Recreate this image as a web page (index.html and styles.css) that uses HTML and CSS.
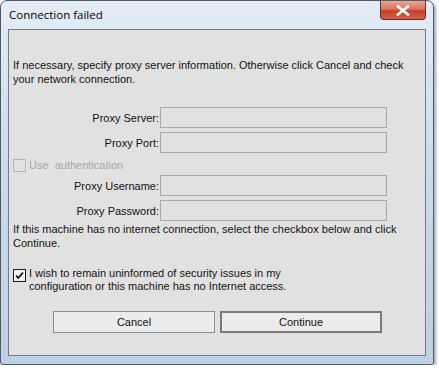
FILE: index.html
```html
<!DOCTYPE html>
<html lang="en">
<head>
    <meta charset="UTF-8">
    <title>Connection failed</title>
    <link rel="stylesheet" href="styles.css">
</head>
<body>
    <div class="window">
        <div class="titlebar">
            <span class="title">Connection failed</span>
            <div class="close-btn">
                <svg width="14" height="11" viewBox="0 0 14 11">
                    <path d="M2 1.5 L12 9.5 M12 1.5 L2 9.5" stroke="#fff" stroke-width="2.6" stroke-linecap="square"/>
                </svg>
            </div>
        </div>
        <div class="client">
            <p class="intro">If necessary, specify proxy server information. Otherwise click Cancel and check your network connection.</p>

            <div class="field">
                <label>Proxy Server:</label>
                <div class="textbox"></div>
            </div>
            <div class="field">
                <label>Proxy Port:</label>
                <div class="textbox"></div>
            </div>

            <div class="check disabled">
                <span class="box"></span>
                <span>Use&nbsp; authentication</span>
            </div>

            <div class="field">
                <label>Proxy Username:</label>
                <div class="textbox"></div>
            </div>
            <div class="field">
                <label>Proxy Password:</label>
                <div class="textbox"></div>
            </div>

            <p class="note">If this machine has no internet connection, select the checkbox below and click Continue.</p>

            <div class="check checked">
                <span class="box">
                    <svg width="9" height="9" viewBox="0 0 9 9">
                        <path d="M1 4.5 L3.3 7 L8 1.5" stroke="#111" stroke-width="1.8" fill="none"/>
                    </svg>
                </span>
                <span>I wish to remain uninformed of security issues in my<br>configuration or this machine has no Internet access.</span>
            </div>

            <div class="buttons">
                <div class="btn">Cancel</div>
                <div class="btn default">Continue</div>
            </div>
        </div>
    </div>
</body>
</html>
```

FILE: styles.css
```css
body {
    margin: 0;
    background: #ffffff;
    font-family: 'Liberation Sans', Arial, sans-serif;
}
.window {
    width: 434px;
    height: 365px;
    border: 1px solid #4f5b69;
    border-radius: 7px 7px 3px 3px;
    background: linear-gradient(180deg, #e4edf6 0%, #cfdcea 40%, #bed0e3 100%);
    box-shadow: 2px 2px 3px rgba(0, 0, 0, 0.35);
    display: flex;
    flex-direction: column;
    padding: 0 7px 8px 7px;
    box-sizing: border-box;
}
.titlebar {
    height: 28px;
    display: flex;
    align-items: flex-start;
    justify-content: space-between;
}
.title {
    font-family: 'Open Sans', 'Noto Sans', sans-serif;
    font-size: 11.5px;
    color: #000;
    margin-top: 6px;
    margin-left: 1px;
}
.close-btn {
    width: 44px;
    height: 18px;
    border: 1px solid #6e2b22;
    border-top: none;
    border-radius: 0 0 4px 4px;
    background: linear-gradient(180deg, #e8a898 0%, #d9735f 45%, #c4412b 55%, #d3604a 100%);
    display: flex;
    align-items: center;
    justify-content: center;
}
.client {
    flex: 1;
    background: #e1e1e1;
    border: 1px solid #6f7d8c;
    padding: 0 4px;
    font-size: 11px;
    color: #111;
}
.intro {
    margin: 28px 0 0 0;
    line-height: 14px;
    width: 395px;
}
.field {
    display: flex;
    align-items: center;
    height: 21px;
    margin-top: 4px;
}
.intro + .field {
    margin-top: 21px;
}
.check + .field {
    margin-top: 3px;
}
.field label {
    width: 146px;
    text-align: right;
    padding-right: 1px;
}
.textbox {
    width: 225px;
    height: 19px;
    border: 1px solid #a9a9a9;
    background: #e1e1e1;
}
.check {
    display: flex;
    align-items: flex-start;
    gap: 3px;
    line-height: 13px;
}
.check .box {
    width: 11px;
    height: 11px;
    border: 1px solid #1c1c1c;
    background: #f4f4f4;
    display: flex;
    align-items: center;
    justify-content: center;
    flex-shrink: 0;
}
.check.disabled {
    margin-top: 6px;
    color: #a6a6a6;
}
.check.disabled .box {
    border-color: #b5b5b5;
    background: #e1e1e1;
}
.check.checked {
    margin-top: 17px;
}
.check.checked .box {
    margin-top: 2px;
}
.note {
    margin: 1px 0 0 0;
    line-height: 14px;
}
.buttons {
    display: flex;
    gap: 5px;
    margin: 18px 0 0 40px;
}
.btn {
    width: 160px;
    height: 20px;
    border: 1px solid #8e8e8e;
    background: #ececec;
    display: flex;
    align-items: center;
    justify-content: center;
    font-size: 11px;
}
.btn.default {
    width: 158px;
    height: 18px;
    border: 2px solid #7a7a7a;
}
```
